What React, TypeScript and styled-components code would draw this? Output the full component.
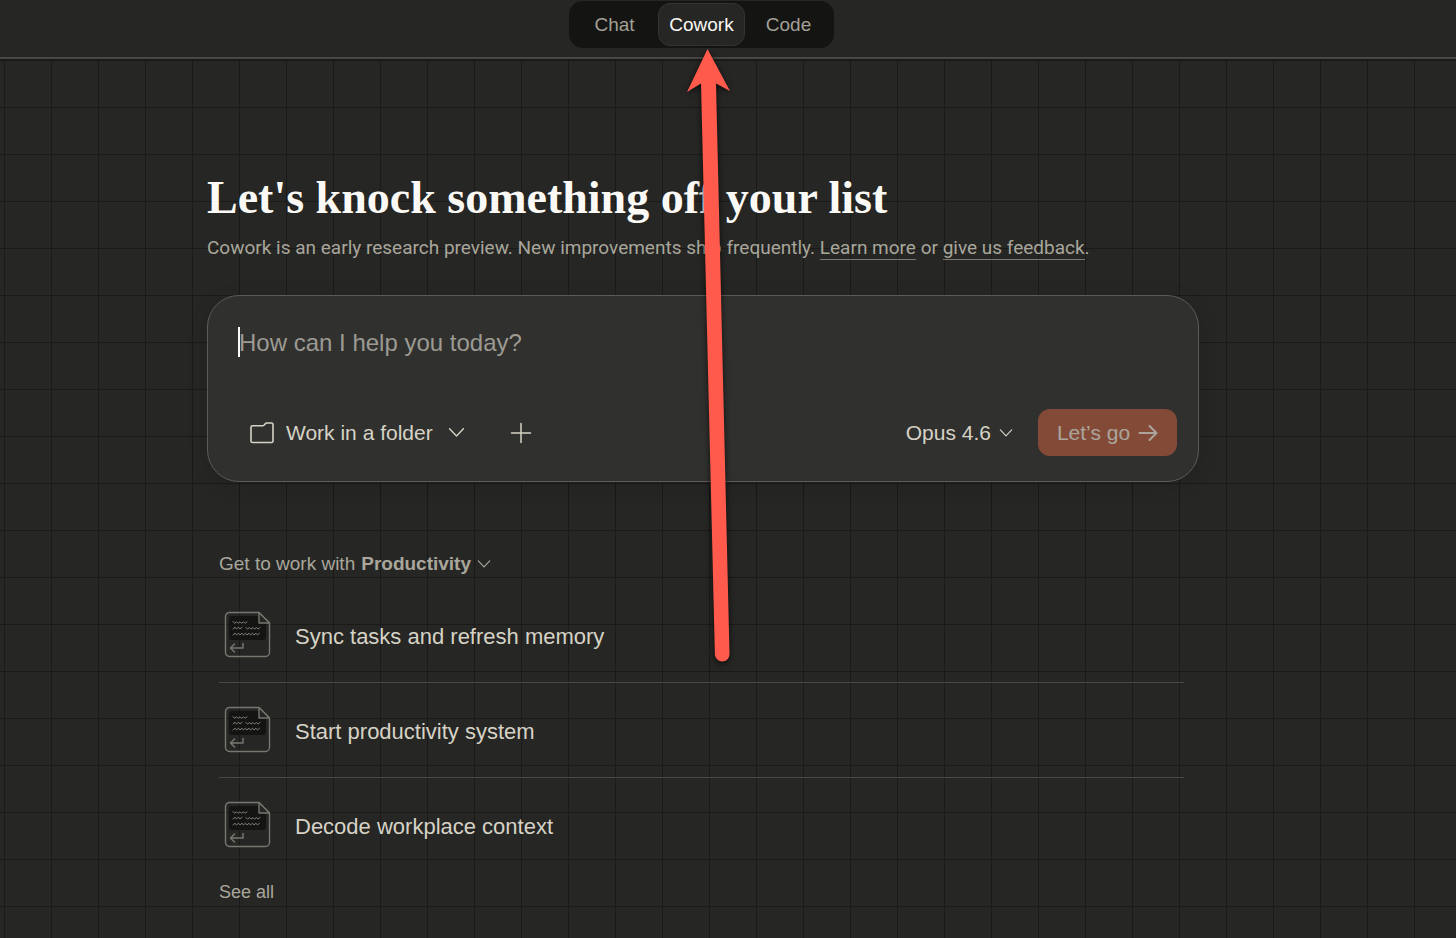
import React from "react";
import styled, { createGlobalStyle } from "styled-components";

const GlobalStyle = createGlobalStyle`
  *, *::before, *::after { box-sizing: border-box; }
  html, body { margin: 0; min-height: 100%; background: #262624; }
  body { font-family: "Liberation Sans", Arial, sans-serif; color: #a9a69c; }
  button, textarea { font: inherit; color: inherit; }
  button { display: inline-flex; align-items: center; border: 0; padding: 0; background: none; cursor: pointer; }
  svg { display: block; flex: none; }
`;

const Page = styled.div`
  position: relative;
  display: flex;
  flex-direction: column;
  min-height: 100vh;
  overflow: hidden;
`;

const Header = styled.header`
  display: flex;
  justify-content: center;
  padding: 1px 53px 9px 0;
  border-bottom: 2px solid #474744;
  background: #262624;
`;

const Tabs = styled.nav`
  display: flex;
  padding: 2px;
  border-radius: 14px;
  background: #141413;
`;

const Tab = styled.button<{ $active?: boolean }>`
  justify-content: center;
  width: 87px;
  height: 43px;
  border: 1px solid ${(p) => (p.$active ? "#343432" : "transparent")};
  border-radius: 12px;
  background: ${(p) => (p.$active ? "#262624" : "transparent")};
  color: ${(p) => (p.$active ? "#faf9f5" : "#a3a096")};
  font-size: 19px;
  line-height: 24px;
`;

const Canvas = styled.main`
  flex: 1;
  padding: 110px 50px 32px 0;
  background-color: #262624;
  background-image: linear-gradient(to right, #1b1a19 1px, transparent 1px),
    linear-gradient(to bottom, #1b1a19 1px, transparent 1px);
  background-size: 47px 47px;
  background-position: 4px 0;
  border-top: 1px solid #1a1a19;
`;

const Column = styled.div`
  width: 100%;
  max-width: 992px;
  margin: 0 auto;
`;

const Title = styled.h1`
  margin: 0;
  font-family: "Liberation Serif", "Times New Roman", serif;
  font-size: 46px;
  line-height: 56px;
  font-weight: 700;
  color: #faf9f5;
`;

const Subtitle = styled.p`
  margin: 10px 0 0;
  font-family: Roboto, "Liberation Sans", sans-serif;
  font-size: 19px;
  line-height: 24px;
`;

const TextLink = styled.a`
  color: inherit;
  text-decoration: none;
  border-bottom: 1px solid #7b7972;
`;

const Composer = styled.form`
  margin-top: 35px;
  padding: 31px 21px 25px 30px;
  border: 1px solid #5c5b57;
  border-radius: 32px;
  background: #30302e;
  box-shadow: 0 4px 20px rgba(0, 0, 0, 0.12);
`;

const Prompt = styled.label`
  display: flex;
  height: 82px;
`;

const Caret = styled.span`
  width: 2px;
  height: 30px;
  margin-right: -1px;
  background: #faf9f5;
`;

const PromptInput = styled.textarea`
  flex: 1;
  height: 60px;
  padding: 0;
  border: 0;
  outline: 0;
  resize: none;
  background: transparent;
  color: #faf9f5;
  font-size: 24px;
  line-height: 32px;
  &::placeholder { color: #9c9a92; opacity: 1; }
`;

const Toolbar = styled.div`
  display: flex;
  align-items: center;
`;

const ToolButton = styled.button<{ $gap: number }>`
  gap: ${(p) => p.$gap}px;
  height: 47px;
  color: #d6d3c6;
  font-size: 21px;
  line-height: 28px;
`;

const FolderButton = styled(ToolButton)`
  padding-left: 11px;
  svg:last-child { margin-left: 4px; }
`;

const AddButton = styled(ToolButton)`
  margin-left: 45px;
`;

const ModelButton = styled(ToolButton)`
  margin-left: auto;
`;

const GoButton = styled(ToolButton)`
  justify-content: center;
  width: 139px;
  margin-left: 25px;
  border-radius: 12px;
  background: #834b37;
  color: #aba59e;
`;

const Suggestions = styled.section`
  padding: 70px 15px 0 12px;
`;

const CategoryButton = styled.button`
  gap: 6px;
  font-size: 19px;
  line-height: 24px;
`;

const List = styled.ul`
  margin: 12px 0 0;
  padding: 0;
  list-style: none;
`;

const Item = styled.li`
  & + & { border-top: 1px solid #484845; }
`;

const ItemButton = styled.button`
  gap: 24px;
  width: 100%;
  height: 94px;
  padding: 0 5px 2px;
  color: #d6d3c6;
  font-size: 22px;
  line-height: 28px;
  text-align: left;
`;

const ItemLabel = styled.span`
  padding-top: 5px;
`;

const SeeAll = styled.button`
  margin-top: 8px;
  font-size: 18px;
  line-height: 24px;
`;

const Arrow = styled.svg`
  position: absolute;
  top: 43px;
  left: calc(50% - 48px);
  pointer-events: none;
  filter: drop-shadow(0 2px 3px rgba(0, 0, 0, 0.7));
`;

const Chevron = ({ size }: { size: number }) => (
  <svg width={size} height={size} viewBox="0 0 16 16" fill="none" stroke="currentColor" strokeWidth="1.3" strokeLinecap="round" strokeLinejoin="round" aria-hidden="true">
    <path d="M1.5 4.5 8 11.2l6.5-6.7" />
  </svg>
);

const FolderIcon = () => (
  <svg width="26" height="24" viewBox="0 0 26 24" fill="none" stroke="currentColor" strokeWidth="1.6" strokeLinejoin="round" aria-hidden="true">
    <path d="M3.5 4.800h10.200c.5 0 .9-.2 1.200-.5l1.500-1.700c.3-.4.7-.6 1.200-.6h4.900c.9 0 1.500.6 1.500 1.500v16.500c0 .9-.6 1.500-1.500 1.500h-19c-.9 0-1.500-.6-1.500-1.500V6.300c0-.9.6-1.500 1.500-1.500Z" />
  </svg>
);

const PlusIcon = () => (
  <svg width="22" height="22" viewBox="0 0 22 22" fill="none" stroke="currentColor" strokeWidth="1.5" strokeLinecap="round" aria-hidden="true">
    <path d="M11 1.500v19M1.500 11h19" />
  </svg>
);

const GoIcon = () => (
  <svg width="20" height="18" viewBox="0 0 20 18" fill="none" stroke="currentColor" strokeWidth="2" strokeLinecap="round" strokeLinejoin="round" aria-hidden="true">
    <path d="M1.500 9h17M11.500 2l7 7-7 7" />
  </svg>
);

const PromptIcon = () => (
  <svg width="47" height="47" viewBox="0 0 47 47" fill="none" stroke="#77776f" strokeLinecap="round" strokeLinejoin="round" aria-hidden="true">
    <rect x="5" y="5" width="37" height="24" rx="3" fill="#141413" stroke="none" />
    <path d="M5.500 1.500H35L45.500 12v29.500a4 4 0 0 1-4 4h-36a4 4 0 0 1-4-4v-36a4 4 0 0 1 4-4Z" strokeWidth="1.400" />
    <path d="M35 1.500V12h10.500Z" fill="#262624" strokeWidth="1.400" />
    <path
      d="M9 10.500l1.500 1.800 2-1.500 1.500 1.500 2-1.500 1.500 1.500 2-1.500 1.500 1.500 2-1.500M9 18l2-1.800 1.500 1.800 2-1.800 1.500 1.800 2-1.800M22 16.500l1.500 1.600 2-1.600 1.500 1.600 2-1.600 1.500 1.600 2-1.600 1.500 1.600 2-1.600M9 24l2-1.800 1.500 1.800 2-1.800 1.500 1.800 2-1.800 1.500 1.800 2-1.800 1.500 1.800 2-1.800 1.500 1.800 2-1.800 1.500 1.800 2-1.800 1.500 1.800 2-1.800"
      stroke="#8a8981"
      strokeWidth="0.900"
    />
    <path d="M19 32.500V37H7M10.500 33 6.500 37l4 4" strokeWidth="1.500" />
  </svg>
);

const tasks = ["Sync tasks and refresh memory", "Start productivity system", "Decode workplace context"];

export default function App() {
  return (
    <>
      <GlobalStyle />
      <Page>
        <Header>
          <Tabs aria-label="Mode">
            <Tab type="button">Chat</Tab>
            <Tab type="button" $active aria-current="page">Cowork</Tab>
            <Tab type="button">Code</Tab>
          </Tabs>
        </Header>
        <Canvas>
          <Column>
            <Title>Let's knock something off your list</Title>
            <Subtitle>
              Cowork is an early research preview. New improvements ship frequently.{" "}
              <TextLink href="#learn">Learn more</TextLink> or <TextLink href="#feedback">give us feedback</TextLink>.
            </Subtitle>
            <Composer onSubmit={(e) => e.preventDefault()}>
              <Prompt>
                <Caret />
                <PromptInput aria-label="Prompt" placeholder="How can I help you today?" />
              </Prompt>
              <Toolbar>
                <FolderButton type="button" $gap={11}>
                  <FolderIcon />
                  Work in a folder
                  <Chevron size={17} />
                </FolderButton>
                <AddButton type="button" $gap={0} aria-label="Add">
                  <PlusIcon />
                </AddButton>
                <ModelButton type="button" $gap={8}>
                  Opus 4.6
                  <Chevron size={14} />
                </ModelButton>
                <GoButton type="submit" $gap={8}>
                  Let’s go
                  <GoIcon />
                </GoButton>
              </Toolbar>
            </Composer>
            <Suggestions>
              <CategoryButton type="button">
                <span>Get to work with</span>
                <strong>Productivity</strong>
                <Chevron size={14} />
              </CategoryButton>
              <List>
                {tasks.map((task) => (
                  <Item key={task}>
                    <ItemButton type="button">
                      <PromptIcon />
                      <ItemLabel>{task}</ItemLabel>
                    </ItemButton>
                  </Item>
                ))}
              </List>
              <SeeAll type="button">See all</SeeAll>
            </Suggestions>
          </Column>
        </Canvas>
        <Arrow width="60" height="632" viewBox="0 0 60 632" aria-hidden="true">
          <path d="M27.500 6 50 48 36 40.500 49.500 611a7.300 7.300 0 0 1-14.600 .5L21 40.500 7 49Z" fill="#ff5a4c" />
        </Arrow>
      </Page>
    </>
  );
}
